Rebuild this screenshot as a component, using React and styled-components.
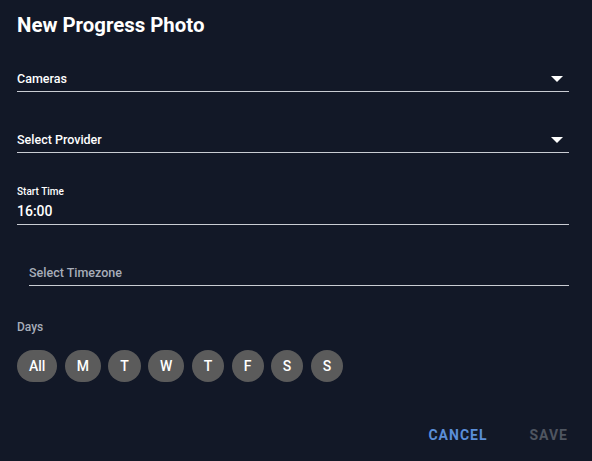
import React from "react";
import styled, { createGlobalStyle } from "styled-components";

const Global = createGlobalStyle`
  html, body { margin: 0; padding: 0; background: #121827; }
  * { box-sizing: border-box; }
`;

const Dialog = styled.div`
  width: 592px;
  height: 461px;
  background: #121827;
  padding: 13px 23px 0 17px;
  font-family: Roboto, "Liberation Sans", sans-serif;
  color: #ffffff;
  display: flex;
  flex-direction: column;
`;

const Title = styled.h2`
  margin: 0;
  font-size: 20.4px;
  line-height: 24px;
  font-weight: 700;
  color: #ffffff;
`;

const SelectField = styled.div`
  display: flex;
  align-items: center;
  justify-content: space-between;
  margin-top: ${(p) => p.$top}px;
  margin-left: ${(p) => p.$indent || 0}px;
  padding-bottom: 2px;
  border-bottom: 1px solid #c9ccd3;
`;

const FieldText = styled.span`
  font-size: 12.5px;
  line-height: 20px;
  font-weight: 500;
  color: ${(p) => (p.$muted ? "#a7adb9" : "#ffffff")};
`;

const Arrow = styled.svg`
  width: 12px;
  height: 6px;
  margin-right: 6px;
  display: block;
`;

const TimeField = styled.div`
  display: flex;
  flex-direction: column;
  margin-top: 33px;
  padding-bottom: 3px;
  border-bottom: 1px solid #c9ccd3;
`;

const SmallLabel = styled.label`
  font-size: 10px;
  line-height: 12px;
  font-weight: 500;
  color: #ffffff;
`;

const TimeValue = styled.span`
  margin-top: 3px;
  font-size: 14px;
  line-height: 20px;
  font-weight: 500;
  color: #ffffff;
`;

const DaysLabel = styled.div`
  margin-top: 33px;
  font-size: 12px;
  line-height: 16px;
  font-weight: 500;
  color: #a7adb9;
`;

const Chips = styled.div`
  display: flex;
  gap: 7.3px;
  margin-top: 15px;
`;

const Chip = styled.button`
  height: 32px;
  min-width: 32px;
  padding: 0 12px;
  border: none;
  border-radius: 16px;
  background: #5b5b5b;
  color: #ffffff;
  font-family: Roboto, "Liberation Sans", sans-serif;
  font-size: 14px;
  font-weight: 500;
  display: flex;
  align-items: center;
  justify-content: center;
`;

const Actions = styled.div`
  display: flex;
  justify-content: flex-end;
  gap: 42px;
  margin-top: 43px;
  padding-right: 1px;
`;

const ActionButton = styled.button`
  background: none;
  border: none;
  padding: 0;
  font-family: Roboto, "Liberation Sans", sans-serif;
  font-size: 14px;
  line-height: 20px;
  font-weight: 700;
  letter-spacing: 1px;
  text-transform: uppercase;
  color: ${(p) => (p.$disabled ? "#4f5560" : "#5b8ed8")};
`;

const DropArrow = () => (
  <Arrow viewBox="0 0 12 6">
    <path d="M0 0 L12 0 L6 6 Z" fill="#ffffff" />
  </Arrow>
);

const days = ["All", "M", "T", "W", "T", "F", "S", "S"];

export default function App() {
  return (
    <>
      <Global />
      <Dialog>
        <Title>New Progress Photo</Title>
        <SelectField $top={32}>
          <FieldText>Cameras</FieldText>
          <DropArrow />
        </SelectField>
        <SelectField $top={38}>
          <FieldText>Select Provider</FieldText>
          <DropArrow />
        </SelectField>
        <TimeField>
          <SmallLabel>Start Time</SmallLabel>
          <TimeValue>16:00</TimeValue>
        </TimeField>
        <SelectField $top={38} $indent={12}>
          <FieldText $muted>Select Timezone</FieldText>
        </SelectField>
        <DaysLabel>Days</DaysLabel>
        <Chips>
          {days.map((d, i) => (
            <Chip key={i}>{d}</Chip>
          ))}
        </Chips>
        <Actions>
          <ActionButton>Cancel</ActionButton>
          <ActionButton $disabled>Save</ActionButton>
        </Actions>
      </Dialog>
    </>
  );
}
